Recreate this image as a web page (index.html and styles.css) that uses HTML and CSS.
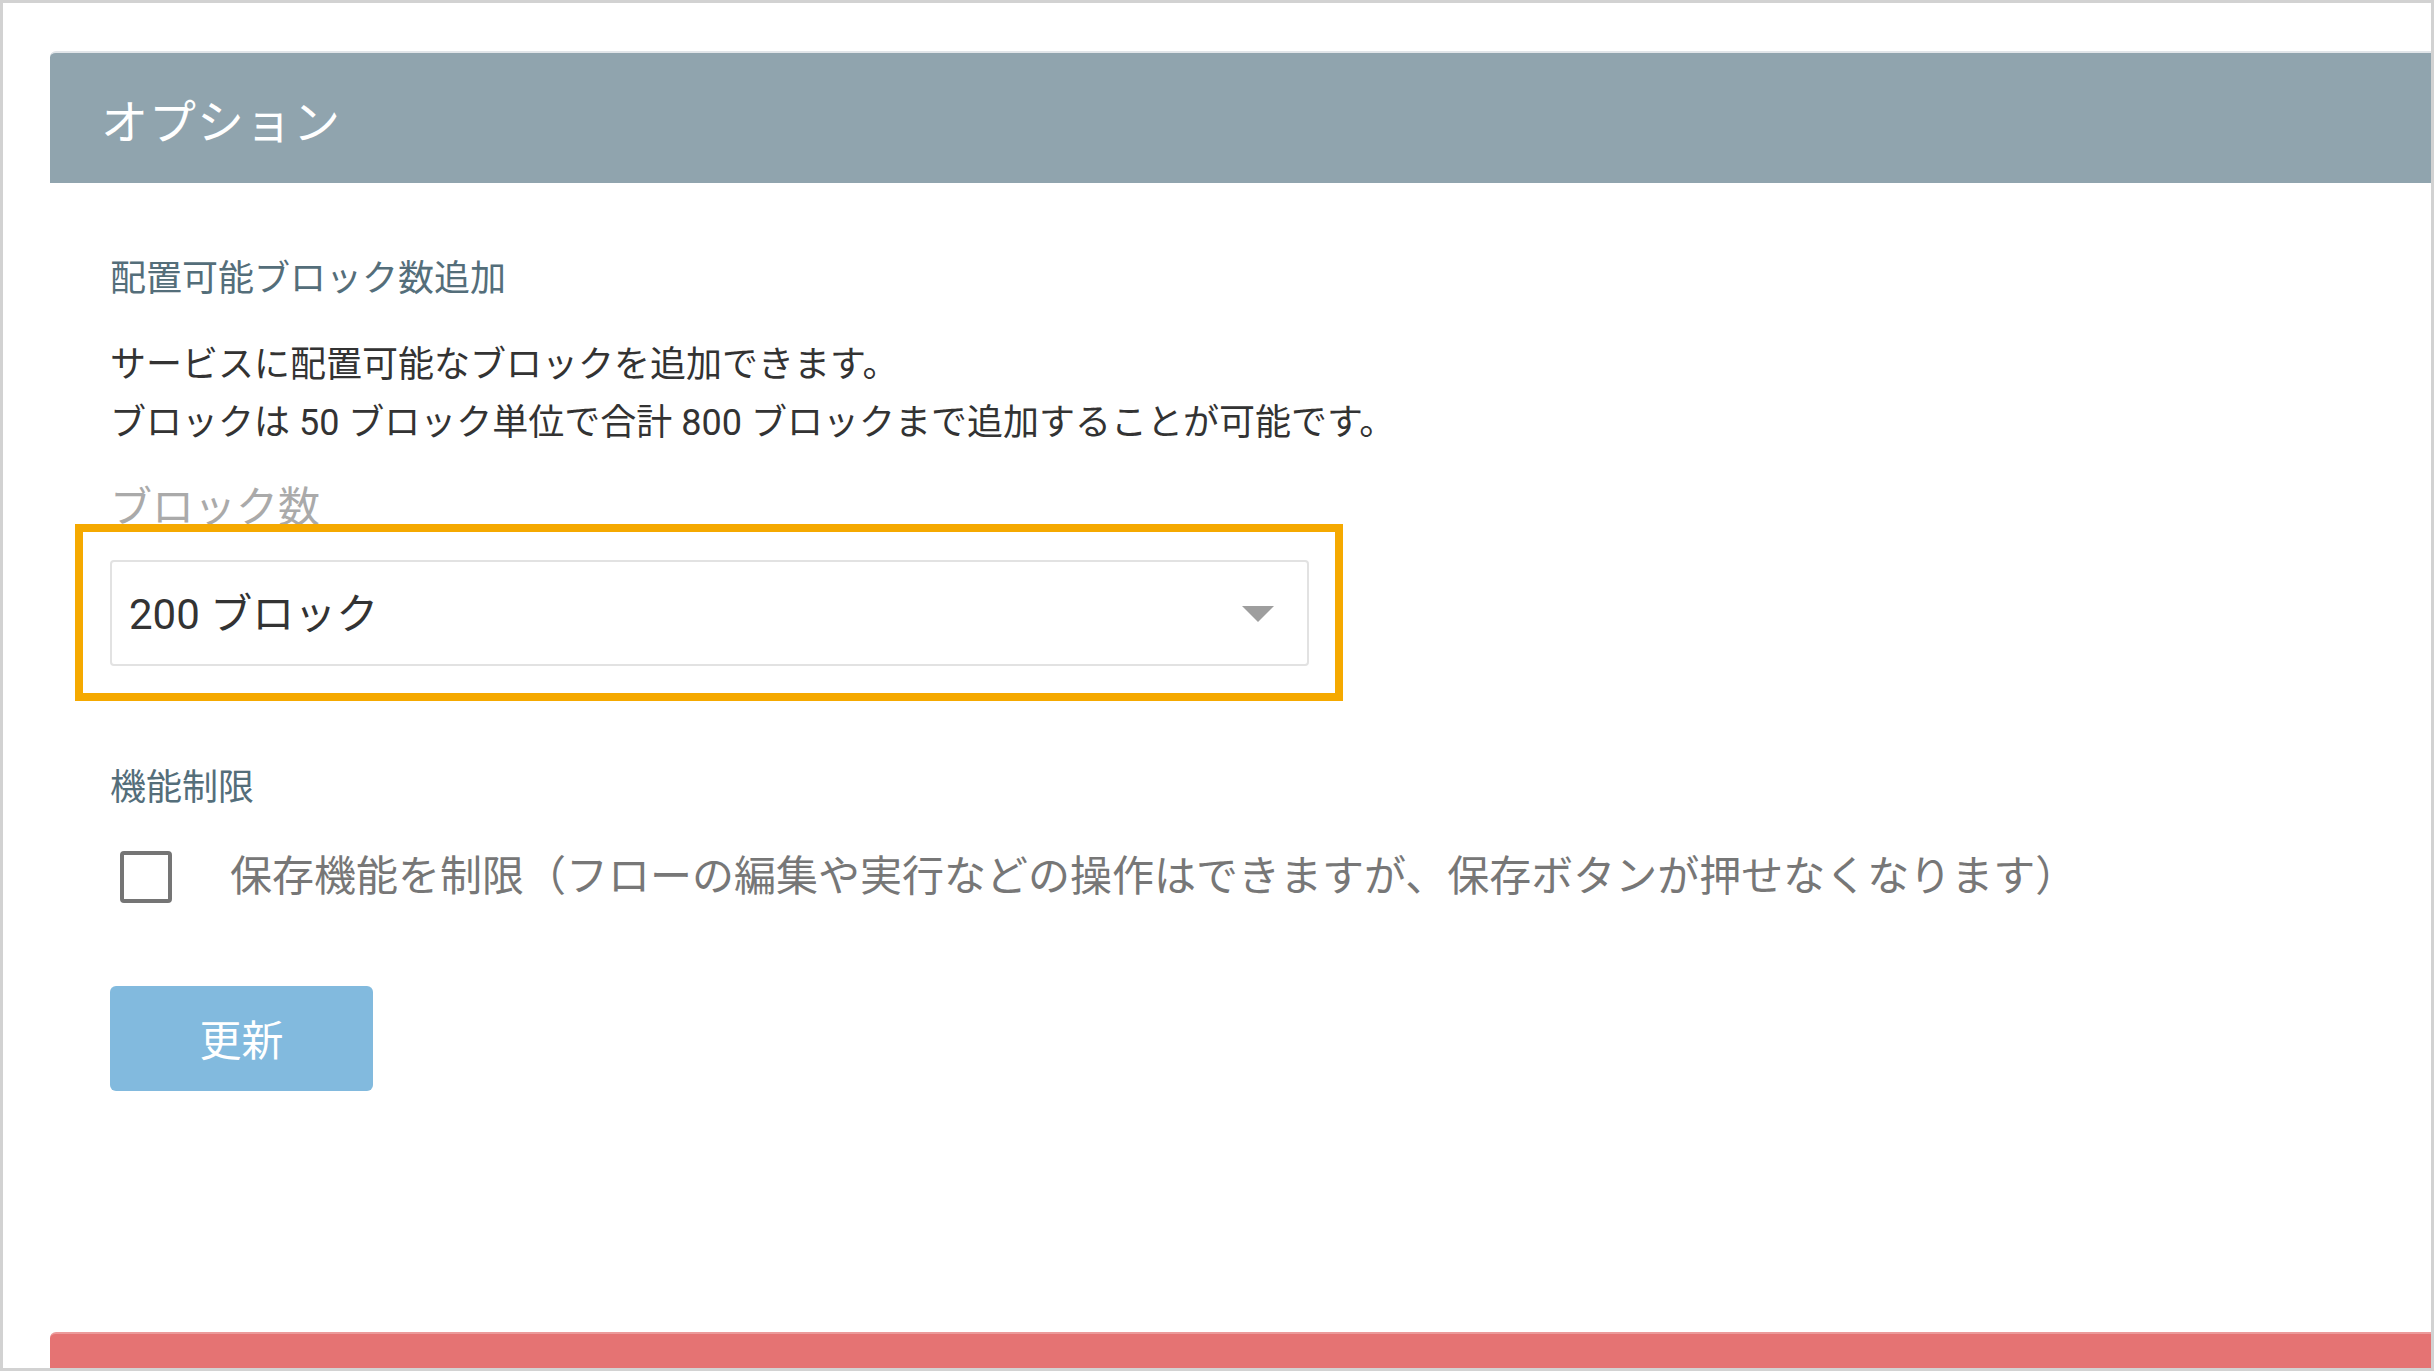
FILE: index.html
```html
<!DOCTYPE html>
<html lang="ja">
<head>
    <meta charset="UTF-8">
    <meta name="viewport" content="width=device-width, initial-scale=1.0">
    <title>オプション</title>
    <link rel="stylesheet" href="styles.css">
</head>
<body>
    <div class="frame">
        <div class="card">
            <div class="card-header">オプション</div>
            <div class="card-body">
                <h2 class="section-title">配置可能ブロック数追加</h2>
                <p class="desc">
                    サービスに配置可能なブロックを追加できます。<br>
                    ブロックは 50 ブロック単位で合計 800 ブロックまで追加することが可能です。
                </p>
                <label class="field-label">ブロック数</label>
                <div class="highlight">
                    <div class="select">
                        <span>200 ブロック</span>
                        <span class="arrow"></span>
                    </div>
                </div>

                <h2 class="section-title second">機能制限</h2>
                <div class="check-row">
                    <span class="checkbox"></span>
                    <span class="check-label">保存機能を制限（フローの編集や実行などの操作はできますが、保存ボタンが押せなくなります）</span>
                </div>

                <button class="btn-update">更新</button>
            </div>
        </div>
        <div class="card danger">
            <div class="card-header"></div>
        </div>
    </div>
</body>
</html>
```

FILE: styles.css
```css
* {
    box-sizing: border-box;
}
body {
    margin: 0;
    font-family: "Roboto", "Noto Sans CJK JP", sans-serif;
    color: #333;
    background: #fff;
}
.frame {
    width: 2434px;
    height: 1371px;
    border: 3px solid #d2d2d2;
    padding: 48px 0 0 47px;
    overflow: hidden;
}
.card {
    background: #fff;
}
.card-header {
    background: #90a4ae;
    border-top: 2px solid #e1e5e9;
    border-radius: 6px 0 0 0;
    height: 132px;
    padding-left: 51px;
    display: flex;
    align-items: center;
    color: #fff;
    font-size: 47px;
    letter-spacing: 1px;
}
.card-body {
    padding: 69px 0 241px 60px;
}
.section-title {
    margin: 0;
    font-size: 36px;
    font-weight: normal;
    line-height: 54px;
    color: #546e7a;
}
.section-title.second {
    margin-top: 95px;
}
.desc {
    margin: 31px 0 0;
    font-size: 36px;
    line-height: 57.6px;
    color: #333;
}
.field-label {
    display: block;
    margin-top: 24px;
    font-size: 42px;
    line-height: 63px;
    color: #aaa;
}
.highlight {
    position: relative;
    width: 1199px;
    margin-top: 21px;
}
.highlight::after {
    content: "";
    position: absolute;
    top: -36px;
    bottom: -35px;
    left: -35px;
    right: -34px;
    border: 8px solid #f5a900;
    pointer-events: none;
}
.select {
    height: 106px;
    border: 2px solid #e2e2e2;
    border-radius: 4px;
    padding: 0 33px 6px 17px;
    display: flex;
    align-items: center;
    justify-content: space-between;
    font-size: 42px;
    color: #333;
}
.arrow {
    width: 0;
    height: 0;
    border-left: 16px solid transparent;
    border-right: 16px solid transparent;
    border-top: 16px solid #9e9e9e;
    margin-top: 8px;
}
.check-row {
    margin-top: 36px;
    display: flex;
    align-items: center;
    gap: 58px;
    padding-left: 10px;
}
.checkbox {
    width: 52px;
    height: 52px;
    border: 4px solid #757575;
    border-radius: 4px;
}
.check-label {
    font-size: 42px;
    line-height: 52px;
    color: #777;
}
.btn-update {
    display: block;
    margin-top: 83px;
    width: 263px;
    height: 105px;
    border: none;
    border-radius: 6px;
    background: #82bade;
    color: #fff;
    font-family: "Roboto", "Noto Sans CJK JP", sans-serif;
    font-size: 42px;
    padding-bottom: 4px;
}
.card.danger .card-header {
    background: #e57373;
    border-top: 2px solid #ec9a9a;
}
```
